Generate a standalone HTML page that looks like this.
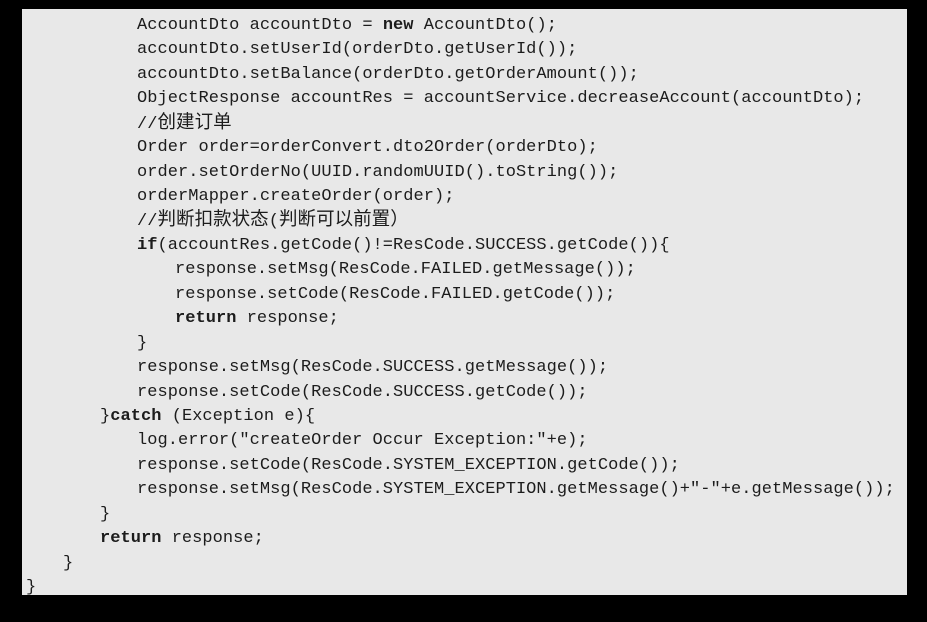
<!DOCTYPE html>
<html><head><meta charset="utf-8"><style>
html,body{margin:0;padding:0;background:#000;width:927px;height:622px;overflow:hidden}
#box{position:absolute;left:22px;top:9px;width:885px;height:586px;background:#e8e8e8}
#w{position:absolute;left:0;top:2px}
.l{position:absolute;white-space:pre;font-family:"Liberation Mono","Noto Sans CJK SC",monospace;font-size:17px;line-height:24.45px;height:24.45px;color:#1c1c1c;letter-spacing:0.04px}
.c{font-size:18.5px}
b{font-weight:bold}
</style></head><body>
<div id="box"></div>
<div id="w">
<div class="l" style="left:137px;top:11.8px">AccountDto accountDto = <b>new</b> AccountDto();</div>
<div class="l" style="left:137px;top:36.25px">accountDto.setUserId(orderDto.getUserId());</div>
<div class="l" style="left:137px;top:60.7px">accountDto.setBalance(orderDto.getOrderAmount());</div>
<div class="l" style="left:137px;top:85.15px">ObjectResponse accountRes = accountService.decreaseAccount(accountDto);</div>
<div class="l" style="left:137px;top:109.6px">//<span class="c">创建订单</span></div>
<div class="l" style="left:137px;top:134.05px">Order order=orderConvert.dto2Order(orderDto);</div>
<div class="l" style="left:137px;top:158.5px">order.setOrderNo(UUID.randomUUID().toString());</div>
<div class="l" style="left:137px;top:182.95px">orderMapper.createOrder(order);</div>
<div class="l" style="left:137px;top:207.4px">//<span class="c">判断扣款状态</span>(<span class="c">判断可以前置）</span></div>
<div class="l" style="left:137px;top:231.85px"><b>if</b>(accountRes.getCode()!=ResCode.SUCCESS.getCode()){</div>
<div class="l" style="left:175px;top:256.3px">response.setMsg(ResCode.FAILED.getMessage());</div>
<div class="l" style="left:175px;top:280.75px">response.setCode(ResCode.FAILED.getCode());</div>
<div class="l" style="left:175px;top:305.2px"><b>return</b> response;</div>
<div class="l" style="left:137px;top:329.65px">}</div>
<div class="l" style="left:137px;top:354.1px">response.setMsg(ResCode.SUCCESS.getMessage());</div>
<div class="l" style="left:137px;top:378.55px">response.setCode(ResCode.SUCCESS.getCode());</div>
<div class="l" style="left:100px;top:403px">}<b>catch</b> (Exception e){</div>
<div class="l" style="left:137px;top:427.45px">log.error("createOrder Occur Exception:"+e);</div>
<div class="l" style="left:137px;top:451.9px">response.setCode(ResCode.SYSTEM_EXCEPTION.getCode());</div>
<div class="l" style="left:137px;top:476.35px">response.setMsg(ResCode.SYSTEM_EXCEPTION.getMessage()+"-"+e.getMessage());</div>
<div class="l" style="left:100px;top:500.8px">}</div>
<div class="l" style="left:100px;top:525.25px"><b>return</b> response;</div>
<div class="l" style="left:63px;top:549.7px">}</div>
<div class="l" style="left:26px;top:574.15px">}</div>
</div>
</body></html>
